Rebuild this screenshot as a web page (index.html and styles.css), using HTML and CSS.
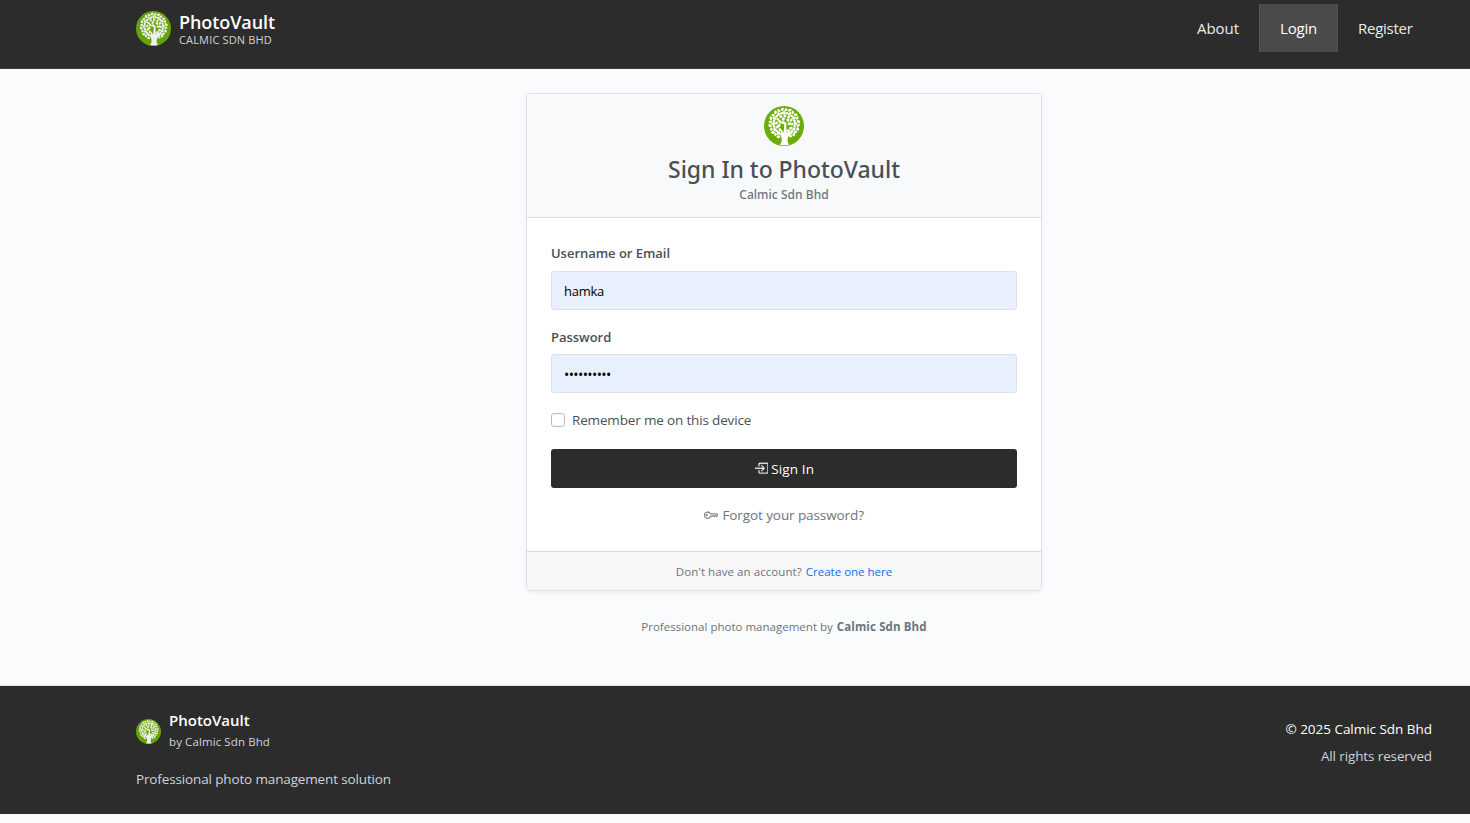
FILE: index.html
```
<!DOCTYPE html>
<html lang="en">
<head>
<meta charset="utf-8">
<title>Sign In - PhotoVault</title>
<link rel="stylesheet" href="styles.css">
</head>
<body>
<svg class="defs" aria-hidden="true">
  <defs>
    <path id="leaf" d="M0-2.1C1.9-1.1 1.9 1.1 0 2.1C-1.9 1.1-1.9-1.1 0-2.1Z"/>
    <g id="sector">
      <use href="#leaf" transform="rotate(-8) translate(0 -14.4) rotate(50)"/>
      <use href="#leaf" transform="rotate(7) translate(0 -14) rotate(-35) scale(.9)"/>
      <use href="#leaf" transform="rotate(-1) translate(0 -11.2) rotate(15)"/>
      <use href="#leaf" transform="rotate(14) translate(0 -10.6) rotate(65) scale(.9)"/>
      <use href="#leaf" transform="rotate(4) translate(0 -7.8) rotate(-50) scale(.9)"/>
    </g>
    <symbol id="tree" viewBox="0 0 40 40">
      <circle cx="20" cy="20" r="20" fill="#6aad08"/>
      <g fill="#fff">
        <g transform="translate(20.3 17.6)">
          <use href="#sector"/>
          <use href="#sector" transform="rotate(30)"/>
          <use href="#sector" transform="rotate(60)"/>
          <use href="#sector" transform="rotate(90)"/>
          <use href="#sector" transform="rotate(120)"/>
          <use href="#sector" transform="rotate(147)"/>
          <use href="#sector" transform="rotate(212)"/>
          <use href="#sector" transform="rotate(240)"/>
          <use href="#sector" transform="rotate(270)"/>
          <use href="#sector" transform="rotate(300)"/>
          <use href="#sector" transform="rotate(330)"/>
          <use href="#leaf" transform="translate(-1 -4.6) rotate(40)"/>
          <use href="#leaf" transform="translate(3.6 -3.6) rotate(-30)"/>
          <use href="#leaf" transform="translate(-4.4 -2) rotate(-50)"/>
          <use href="#leaf" transform="translate(-1.2 -1) rotate(60)"/>
          <use href="#leaf" transform="translate(5.2 .2) rotate(70)"/>
          <use href="#leaf" transform="translate(-5.2 1.8) rotate(20)"/>
        </g>
        <path d="M15.8 38.8C17.6 37.3 18.1 34.6 17.5 31.6C17 29 14.8 27.4 11.4 25.6C14 25.8 15.9 26.3 17.2 27.3C17.3 25.5 16.6 23.5 15.4 21.8C17.5 23 18.7 25 19.2 27C20.3 23.5 20.2 20 20 16.5H22.5C22.2 20.5 22.4 24.5 22.8 27C23.5 25.5 24.8 23.6 27 22.4C25.9 24.3 25.3 26 25.2 27.4C26.6 26.4 28.3 25.8 30.4 25.6C27.4 27.4 24.9 29 24 31.6C23.2 34.5 23.5 37.3 25.2 38.8Q20 39.8 15.8 38.8Z"/>
      </g>
    </symbol>
  </defs>
</svg>

<header class="navbar">
  <a class="brand">
    <svg class="brand-logo"><use href="#tree"/></svg>
    <span class="brand-text">
      <span class="brand-name">PhotoVault</span>
      <span class="brand-company">CALMIC SDN BHD</span>
    </span>
  </a>
  <nav class="nav-links">
    <a class="nav-link nav-about">About</a>
    <a class="nav-link active">Login</a>
    <a class="nav-link nav-register">Register</a>
  </nav>
</header>

<main class="page">
  <section class="card">
    <div class="card-header">
      <svg class="card-logo"><use href="#tree"/></svg>
      <h1 class="card-title">Sign In to PhotoVault</h1>
      <span class="card-subtitle">Calmic Sdn Bhd</span>
    </div>
    <form class="card-body">
      <label class="field-label" for="user">Username or Email</label>
      <input class="field" id="user" type="text" value="hamka">
      <label class="field-label" for="pass">Password</label>
      <input class="field field-password" id="pass" type="password" value="photovault">
      <label class="remember"><input class="checkbox" type="checkbox"><span>Remember me on this device</span></label>
      <button class="submit" type="button">
        <svg class="icon" viewBox="0 0 16 16"><path fill-rule="evenodd" d="M6 3.5a.5.5 0 0 1 .5-.5h8a.5.5 0 0 1 .5.5v9a.5.5 0 0 1-.5.5h-8a.5.5 0 0 1-.5-.5v-2a.5.5 0 0 0-1 0v2A1.5 1.5 0 0 0 6.5 14h8a1.5 1.5 0 0 0 1.5-1.5v-9A1.5 1.5 0 0 0 14.5 2h-8A1.5 1.5 0 0 0 5 3.5v2a.5.5 0 0 0 1 0z"/><path fill-rule="evenodd" d="M11.854 8.354a.5.5 0 0 0 0-.708l-3-3a.5.5 0 1 0-.708.708L10.293 7.5H1.5a.5.5 0 0 0 0 1h8.793l-2.147 2.146a.5.5 0 0 0 .708.708z"/></svg>
        <span>Sign In</span>
      </button>
      <a class="forgot">
        <svg class="icon" viewBox="0 0 16 16"><path d="M0 8a4 4 0 0 1 7.465-2H14a.5.5 0 0 1 .354.146l1.5 1.5a.5.5 0 0 1 0 .708l-1.5 1.5a.5.5 0 0 1-.708 0L13 9.207l-.646.647a.5.5 0 0 1-.708 0L11 9.207l-.646.647a.5.5 0 0 1-.708 0L9 9.207l-.646.647A.5.5 0 0 1 8 10h-.535A4 4 0 0 1 0 8m4-3a3 3 0 1 0 2.712 4.285A.5.5 0 0 1 7.163 9h.63l.853-.854a.5.5 0 0 1 .708 0l.646.647.646-.647a.5.5 0 0 1 .708 0l.646.647.646-.647a.5.5 0 0 1 .708 0l.646.647.793-.793-1-1h-6.63a.5.5 0 0 1-.451-.285A3 3 0 0 0 4 5"/><path d="M4 8a1 1 0 1 1-2 0 1 1 0 0 1 2 0"/></svg>
        <span>Forgot your password?</span>
      </a>
    </form>
    <div class="card-footer"><span class="prompt">Don't have an account?</span><a class="create">Create one here</a></div>
  </section>
  <p class="tagline"><span class="tagline-text">Professional photo management by</span><strong>Calmic Sdn Bhd</strong></p>
</main>

<footer class="footer">
  <div class="footer-left">
    <div class="footer-brand">
      <svg class="footer-logo"><use href="#tree"/></svg>
      <div class="footer-brand-text">
        <span class="footer-name">PhotoVault</span>
        <span class="footer-company">by Calmic Sdn Bhd</span>
      </div>
    </div>
    <p class="footer-note">Professional photo management solution</p>
  </div>
  <div class="footer-right">
    <span class="copyright">© 2025 Calmic Sdn Bhd</span>
    <span class="rights">All rights reserved</span>
  </div>
</footer>
</body>
</html>
```

FILE: styles.css
```
* { box-sizing: border-box; }

body {
  margin: 0;
  background: #fafbfd;
  font-family: "Open Sans", "Noto Sans", sans-serif;
  color: #495057;
}

.defs { display: block; width: 0; height: 0; }

.navbar {
  display: flex;
  justify-content: space-between;
  align-items: flex-start;
  height: 69px;
  padding: 4px 38px 0 136px;
  background: #2c2c2c;
  border-bottom: 1px solid #404040;
}

.brand { display: flex; gap: 8px; padding-top: 7px; }
.brand-logo { width: 35px; height: 35px; opacity: .93; }
.brand-text { display: flex; flex-direction: column; }
.brand-name {
  font-size: 18px;
  font-weight: 600;
  line-height: 22px;
  letter-spacing: -.08px;
  color: #fff;
}
.brand-company {
  font-size: 11px;
  line-height: 14px;
  letter-spacing: .16px;
  color: #d0d3d6;
}

.nav-links { display: flex; }
.nav-link {
  height: 48px;
  border: 1px solid transparent;
  border-width: 0 1px;
  font-size: 15px;
  line-height: 48px;
  color: #e9ecef;
}
.nav-about { padding-right: 19px; letter-spacing: -.04px; }
.nav-link.active {
  width: 79px;
  padding-left: 20px;
  letter-spacing: -.2px;
  background: #4a4a4a;
  border-color: #555;
  color: #fff;
}
.nav-register {
  width: 94px;
  padding-left: 19px;
  letter-spacing: -.27px;
}

.page {
  display: flex;
  flex-direction: column;
  align-items: center;
  height: 616px;
  padding: 24px 38px 0 136px;
}

.card {
  width: 516px;
  height: 498px;
  overflow: hidden;
  background: #fff;
  border: 1px solid #dee2e6;
  border-radius: 4px;
  box-shadow: 0 2px 4px rgba(0, 0, 0, .05);
}

.card-header {
  display: flex;
  flex-direction: column;
  align-items: center;
  height: 124px;
  padding-top: 12px;
  background: #f8f9fb;
  border-bottom: 1px solid #dee2e6;
  font-family: "Noto Sans", "Open Sans", sans-serif;
}
.card-logo { width: 40px; height: 40px; }
.card-title {
  margin: 9px 0 0;
  font-size: 23px;
  font-weight: 500;
  line-height: 28px;
  letter-spacing: -.03px;
}
.card-subtitle {
  margin-top: 4px;
  font-size: 12px;
  font-weight: 500;
  line-height: 16px;
  letter-spacing: .05px;
  color: #6c757d;
}

.card-body {
  display: flex;
  flex-direction: column;
  height: 333px;
  padding: 25px 24px 0;
}
.field-label {
  font-size: 13px;
  font-weight: 600;
  line-height: 20px;
  letter-spacing: -.03px;
}
.field {
  height: 39px;
  margin: 8px 0 17px;
  padding: 1px 12px 0;
  background: #e8f0fe;
  border: 1px solid #dee2e6;
  border-radius: 3px;
  font: 500 13px "Open Sans", "Noto Sans", sans-serif;
  letter-spacing: -.25px;
  color: #000;
}
.field-password {
  margin: 7px 0 17px;
  font-size: 14px;
  letter-spacing: -.6px;
}

.remember {
  display: flex;
  align-items: center;
  gap: 7px;
  height: 20px;
  font-size: 13.5px;
  line-height: 20px;
  letter-spacing: -.16px;
}
.checkbox {
  appearance: none;
  width: 14px;
  height: 14px;
  margin: 0;
  background: #fff;
  border: 1px solid #b9bcbf;
  border-radius: 3px;
}

.submit {
  display: flex;
  justify-content: center;
  align-items: center;
  gap: 3px;
  height: 39px;
  margin: 19px 0 0;
  padding: 0;
  background: #2c2c2c;
  border: 0;
  border-radius: 3px;
  font: 400 13.5px "Open Sans", "Noto Sans", sans-serif;
  letter-spacing: .14px;
  color: #fff;
}
.icon {
  width: 14.4px;
  height: 14.4px;
  fill: currentColor;
  stroke: currentColor;
  stroke-width: .25;
}

.forgot {
  display: flex;
  justify-content: center;
  align-items: center;
  gap: 4px;
  margin-top: 17px;
  font-size: 13.5px;
  line-height: 20px;
  letter-spacing: -.09px;
  color: #6c757d;
}

.card-footer {
  display: flex;
  justify-content: center;
  gap: 4px;
  height: 39px;
  background: #f7f7f7;
  border-top: 1px solid #d5d8da;
  font-size: 11.5px;
  line-height: 40px;
  color: #6c757d;
}
.prompt { letter-spacing: .07px; }
.create { color: #0d6efd; }

.tagline {
  display: flex;
  gap: 4px;
  margin: 26px 0 0;
  font-size: 11.5px;
  line-height: 20px;
  letter-spacing: .12px;
  color: #6c757d;
}
.tagline-text { letter-spacing: .01px; }

.footer {
  display: flex;
  justify-content: space-between;
  height: 129px;
  padding: 24px 38px 0 136px;
  background: #2c2c2c;
  border-top: 1px solid #dee2e6;
}
.footer-brand { display: flex; align-items: center; gap: 8px; height: 43px; }
.footer-logo { width: 25px; height: 25px; opacity: .93; }
.footer-brand-text {
  display: flex;
  flex-direction: column;
  height: 43px;
}
.footer-name {
  font-size: 15px;
  font-weight: 600;
  line-height: 21px;
  color: #fff;
}
.footer-company {
  font-size: 11.5px;
  line-height: 22px;
  letter-spacing: .1px;
  color: #ced4da;
}
.footer-note {
  margin: 16px 0 0;
  font-size: 13.5px;
  line-height: 20px;
  letter-spacing: -.14px;
  color: #ced4da;
}
.footer-right {
  display: flex;
  flex-direction: column;
  align-items: flex-end;
  gap: 7px;
  padding-top: 9px;
  font-size: 13.5px;
  line-height: 20px;
}
.copyright { letter-spacing: -.03px; color: #fff; }
.rights { letter-spacing: -.12px; color: #ced4da; }
```
